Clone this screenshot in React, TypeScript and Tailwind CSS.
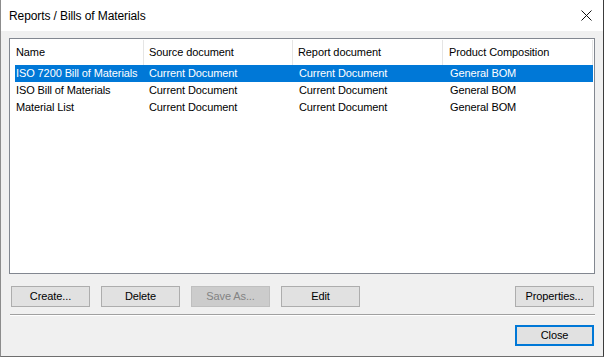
import React from 'react';

const rows = [
  { name: 'ISO 7200 Bill of Materials', source: 'Current Document', report: 'Current Document', comp: 'General BOM' },
  { name: 'ISO Bill of Materials', source: 'Current Document', report: 'Current Document', comp: 'General BOM' },
  { name: 'Material List', source: 'Current Document', report: 'Current Document', comp: 'General BOM' },
];

const Button = ({ label, disabled, primary, className = '' }: { label: string; disabled?: boolean; primary?: boolean; className?: string }) => (
  <div
    className={`h-[21px] w-[79px] flex items-center justify-center leading-none ${
      disabled
        ? 'bg-[#cccccc] border border-[#bfbfbf] text-[#838383]'
        : primary
        ? 'bg-[#e1e1e1] border-2 border-[#0078d7] text-black'
        : 'bg-[#e1e1e1] border border-[#adadad] text-black'
    } ${className}`}
  >
    {label}
  </div>
);

const App = () => {
  return (
    <div
      className="w-[604px] h-[357px] flex flex-col bg-[#f0f0f0] border-l border-l-[#8c8c8c] border-r border-r-[#3c3c3c] border-b border-b-[#6e6e6e] text-[11px] tracking-[-0.1px] text-black"
      style={{ fontFamily: '"Liberation Sans", Arial, sans-serif' }}
    >
      {/* title bar */}
      <div className="h-[31px] bg-white flex items-center justify-between pl-[8px] pr-[10px]">
        <p className="text-[12px] tracking-[-0.1px]">Reports / Bills of Materials</p>
        <svg width="11" height="11" viewBox="0 0 11 11" className="mr-[1px]">
          <path d="M0.5 0.5 L10.5 10.5 M10.5 0.5 L0.5 10.5" stroke="#111" strokeWidth="1" />
        </svg>
      </div>

      {/* list */}
      <div className="mt-[7px] ml-[8px] w-[586px] h-[236px] bg-white border border-[#828790]">
        <div className="flex h-[26px] items-center pt-[1px]">
          <div className="w-[134px] h-full flex items-center pl-[6px] border-r border-[#e5e5e5]">Name</div>
          <div className="w-[149px] h-full flex items-center pl-[5px] border-r border-[#e5e5e5]">Source document</div>
          <div className="w-[150px] h-full flex items-center pl-[5px] border-r border-[#e5e5e5]">Report document</div>
          <div className="w-[150px] h-full flex items-center pl-[6px] border-r border-[#e5e5e5]">Product Composition</div>
        </div>
        <div className="flex flex-col">
          {rows.map((r, i) => (
            <div
              key={i}
              className={`ml-[5px] w-[578px] h-[17px] flex items-center ${i === 0 ? 'bg-[#0078d7] text-white' : ''}`}
            >
              <div className="w-[129px] pl-[1px] whitespace-nowrap">{r.name}</div>
              <div className="w-[150px] pl-[5px] whitespace-nowrap">{r.source}</div>
              <div className="w-[150px] pl-[5px] whitespace-nowrap">{r.report}</div>
              <div className="w-[149px] pl-[6px] whitespace-nowrap">{r.comp}</div>
            </div>
          ))}
        </div>
      </div>

      {/* action buttons */}
      <div className="mt-[12px] ml-[10px] mr-[9px] flex items-center">
        <Button label="Create..." />
        <Button label="Delete" className="ml-[11px]" />
        <Button label="Save As..." disabled className="ml-[11px]" />
        <Button label="Edit" className="ml-[11px]" />
        <div className="flex-1" />
        <Button label="Properties..." />
      </div>

      <div className="mt-[7px] ml-[9px] mr-[8px] border-t border-t-[#a0a0a0] border-b border-b-white" />

      <div className="mt-[9px] mr-[9px] flex justify-end">
        <Button label="Close" primary />
      </div>
    </div>
  );
};

export default App;
